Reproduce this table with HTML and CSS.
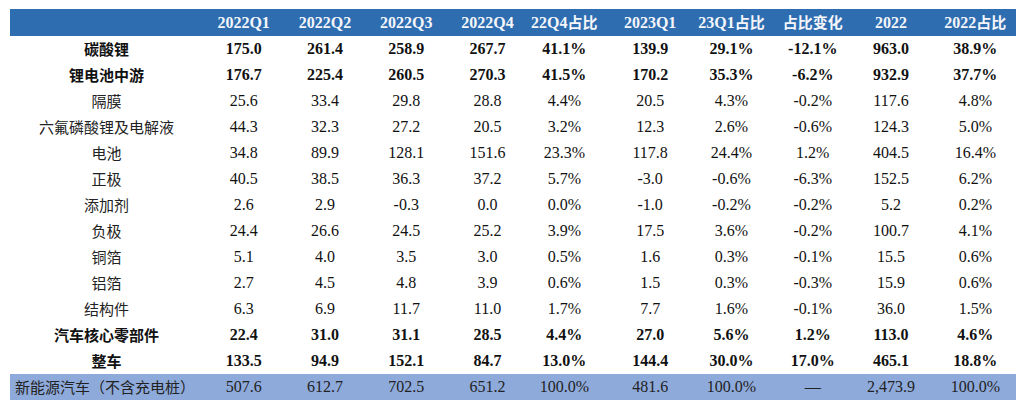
FILE: index.html
```html
<!DOCTYPE html>
<html lang="zh">
<head>
<meta charset="utf-8">
<link rel="stylesheet" href="styles.css">
</head>
<body>
<table class="tbl">
<colgroup>
<col class="c-label">
<col><col><col><col><col><col><col><col><col><col>
</colgroup>
<thead>
<tr class="head">
<th></th>
<th>2022Q1</th><th>2022Q2</th><th>2022Q3</th><th>2022Q4</th>
<th>22Q4<span class="cn">占比</span></th>
<th>2023Q1</th>
<th>23Q1<span class="cn">占比</span></th>
<th><span class="cn">占比变化</span></th>
<th>2022</th>
<th>2022<span class="cn">占比</span></th>
</tr>
</thead>
<tbody>
<tr class="bold"><td class="label">碳酸锂</td><td>175.0</td><td>261.4</td><td>258.9</td><td>267.7</td><td>41.1%</td><td>139.9</td><td>29.1%</td><td>-12.1%</td><td>963.0</td><td>38.9%</td></tr>
<tr class="bold"><td class="label">锂电池中游</td><td>176.7</td><td>225.4</td><td>260.5</td><td>270.3</td><td>41.5%</td><td>170.2</td><td>35.3%</td><td>-6.2%</td><td>932.9</td><td>37.7%</td></tr>
<tr><td class="label">隔膜</td><td>25.6</td><td>33.4</td><td>29.8</td><td>28.8</td><td>4.4%</td><td>20.5</td><td>4.3%</td><td>-0.2%</td><td>117.6</td><td>4.8%</td></tr>
<tr><td class="label">六氟磷酸锂及电解液</td><td>44.3</td><td>32.3</td><td>27.2</td><td>20.5</td><td>3.2%</td><td>12.3</td><td>2.6%</td><td>-0.6%</td><td>124.3</td><td>5.0%</td></tr>
<tr><td class="label">电池</td><td>34.8</td><td>89.9</td><td>128.1</td><td>151.6</td><td>23.3%</td><td>117.8</td><td>24.4%</td><td>1.2%</td><td>404.5</td><td>16.4%</td></tr>
<tr><td class="label">正极</td><td>40.5</td><td>38.5</td><td>36.3</td><td>37.2</td><td>5.7%</td><td>-3.0</td><td>-0.6%</td><td>-6.3%</td><td>152.5</td><td>6.2%</td></tr>
<tr><td class="label">添加剂</td><td>2.6</td><td>2.9</td><td>-0.3</td><td>0.0</td><td>0.0%</td><td>-1.0</td><td>-0.2%</td><td>-0.2%</td><td>5.2</td><td>0.2%</td></tr>
<tr><td class="label">负极</td><td>24.4</td><td>26.6</td><td>24.5</td><td>25.2</td><td>3.9%</td><td>17.5</td><td>3.6%</td><td>-0.2%</td><td>100.7</td><td>4.1%</td></tr>
<tr><td class="label">铜箔</td><td>5.1</td><td>4.0</td><td>3.5</td><td>3.0</td><td>0.5%</td><td>1.6</td><td>0.3%</td><td>-0.1%</td><td>15.5</td><td>0.6%</td></tr>
<tr><td class="label">铝箔</td><td>2.7</td><td>4.5</td><td>4.8</td><td>3.9</td><td>0.6%</td><td>1.5</td><td>0.3%</td><td>-0.3%</td><td>15.9</td><td>0.6%</td></tr>
<tr><td class="label">结构件</td><td>6.3</td><td>6.9</td><td>11.7</td><td>11.0</td><td>1.7%</td><td>7.7</td><td>1.6%</td><td>-0.1%</td><td>36.0</td><td>1.5%</td></tr>
<tr class="bold"><td class="label">汽车核心零部件</td><td>22.4</td><td>31.0</td><td>31.1</td><td>28.5</td><td>4.4%</td><td>27.0</td><td>5.6%</td><td>1.2%</td><td>113.0</td><td>4.6%</td></tr>
<tr class="bold"><td class="label">整车</td><td>133.5</td><td>94.9</td><td>152.1</td><td>84.7</td><td>13.0%</td><td>144.4</td><td>30.0%</td><td>17.0%</td><td>465.1</td><td>18.8%</td></tr>
<tr class="total"><td class="label">新能源汽车（不含充电桩）</td><td>507.6</td><td>612.7</td><td>702.5</td><td>651.2</td><td>100.0%</td><td>481.6</td><td>100.0%</td><td>—</td><td>2,473.9</td><td>100.0%</td></tr>
</tbody>
</table>
</body>
</html>
```
FILE: styles.css
```css
html, body {
  background: #ffffff;
}
body {
  margin: 9px 0 0 10px;
  font-family: "Liberation Serif", "Noto Sans CJK SC", serif;
  color: #111111;
}
.tbl {
  width: 1006px;
  table-layout: fixed;
  border-collapse: collapse;
  border-spacing: 0;
}
.c-label {
  width: 193px;
}
.tbl th,
.tbl td {
  height: 26px;
  padding: 0;
  text-align: center;
  vertical-align: middle;
  font-size: 16px;
  line-height: 26px;
  white-space: nowrap;
}
.tbl th:nth-child(6),
.tbl td:nth-child(6) {
  padding-right: 9px;
}
.tbl th:nth-child(10),
.tbl td:nth-child(10) {
  padding-right: 6px;
}
.head th {
  background: #2f6db1;
  color: #f4f6fa;
  font-weight: bold;
}
.cn {
  font-family: "Noto Sans CJK SC", sans-serif;
  font-size: 15px;
  font-weight: bold;
}
.label {
  font-family: "Noto Sans CJK SC", sans-serif;
  font-size: 15px !important;
  color: #222222;
}
.bold td {
  font-weight: bold;
}
.bold .label {
  color: #111111;
}
.total td {
  background: #8eaadb;
  color: #222222;
}
.total .label {
  text-align: left;
  padding-left: 5px;
}
```
